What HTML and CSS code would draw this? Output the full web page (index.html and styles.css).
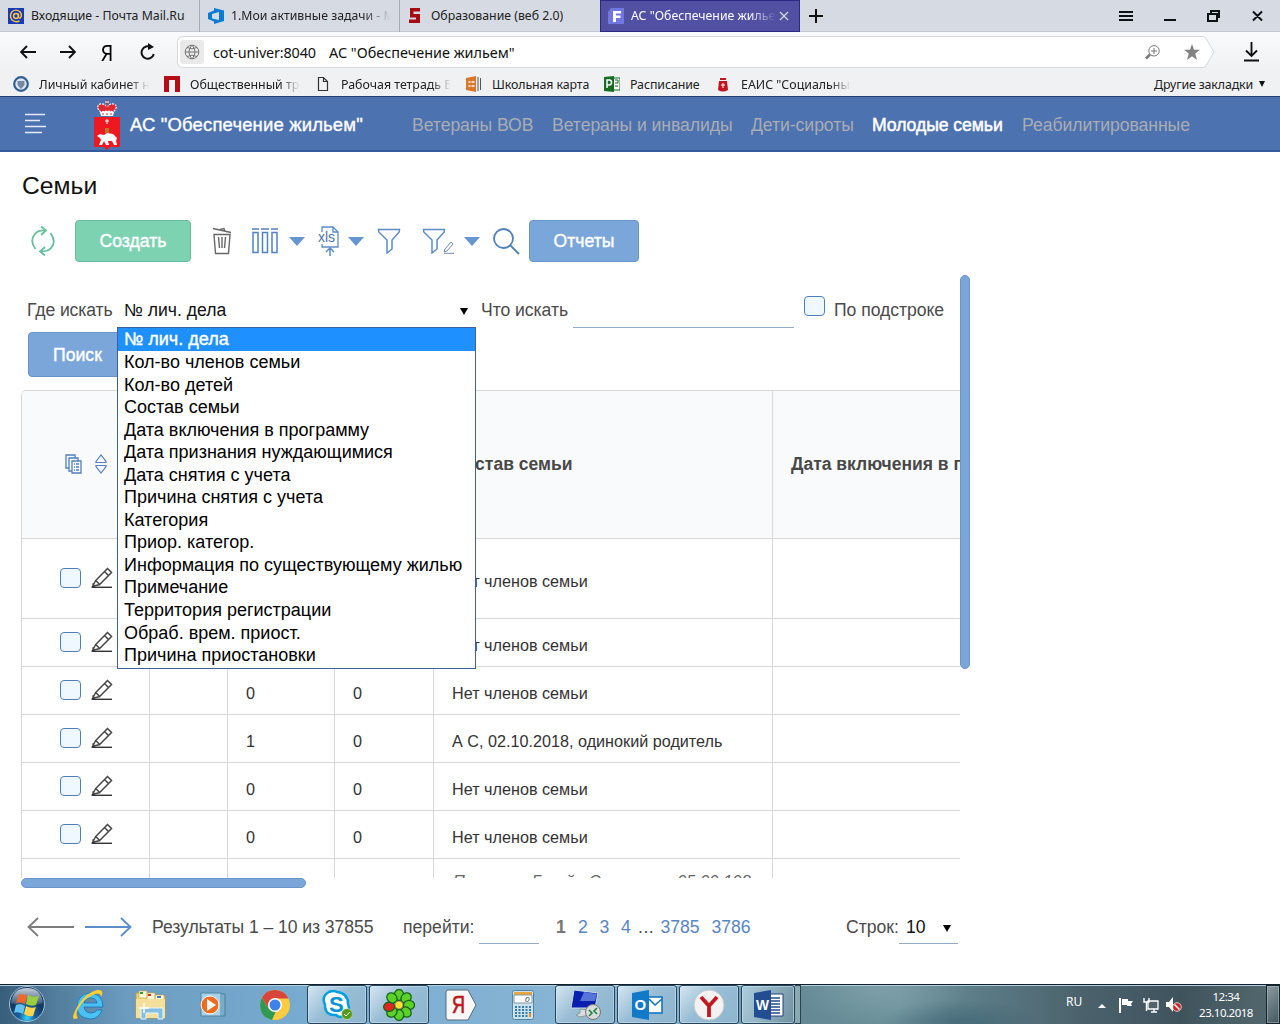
FILE: index.html
```html
<!DOCTYPE html>
<html lang="ru">
<head>
<meta charset="utf-8">
<title>АС "Обеспечение жильем"</title>
<link rel="stylesheet" href="styles.css">
</head>
<body>
<svg class="defs" width="0" height="0" aria-hidden="true">
  <symbol id="pencil" viewBox="0 0 22 22"><path d="M4.700 13.500 16.500 1.500 20.500 5.500 8.700 17.500zM13.500 4.500l4 4M4.700 13.500 1.500 19.500 8.700 17.500M1.500 16.500l2.500 3" fill="none" stroke="#454545" stroke-width="1.500"/><path d="M1 20.300h20" stroke="#333" stroke-width="1.400"/></symbol>
  <symbol id="funnel" viewBox="0 0 24 26"><path d="M1.500 1.500h21L22.200 4 15 12v9l-5 4V12L1.800 4zM1.500 1.500h21" fill="none" stroke="#5b8dc9" stroke-width="1.500"/></symbol>
</svg>

<div class="tabs">
  <div class="tab"><svg width="16" height="16"><rect width="16" height="16" fill="#163bb8"/><circle cx="8" cy="8" r="2.400" fill="none" stroke="#ffc43d" stroke-width="1.500"/><path d="M10.500 5.500v3.500q.6 1.800 2 .7Q14.500 7 12 3.800 8 .5 4 3.700 1 8 4 12q4 3 7.500.800" fill="none" stroke="#ffc43d" stroke-width="1.400"/></svg><span class="t-mail">Входящие - Почта Mail.Ru</span></div>
  <div class="tab"><svg width="16" height="16"><path d="M0 5 6 2.500V0l10 2.500v10.500L6 16v-2.500L0 11zM4 6v4.500l7 1.500V4z" fill="#087cd3" fill-rule="evenodd"/></svg><span class="t-task fade">1.Мои активные задачи - M</span></div>
  <div class="tab last"><svg width="16" height="16"><path d="M2 0h10v3.500H5.500V6H12v9H1v-3.500h7V9.500H2z" fill="#a50b13"/></svg><span class="t-edu">Образование (веб 2.0)</span></div>
  <div class="tab active"><svg width="16" height="16"><path d="M3 0h13v16H0V4z" fill="#7276e0"/><path d="M5 3h8v2.500H8v2h4.500V10H8v4H5z" fill="#fff"/></svg><span class="t-act fade">АС "Обеспечение жильем"</span><svg class="tab-x" width="10" height="10"><path d="m1 1 8 8m0-8L1 9" stroke="#d9d9f5" stroke-width="1.200"/></svg></div>
  <svg class="plus" width="14" height="14"><path d="M7 0v14M0 7h14" stroke="#111" stroke-width="2"/></svg>
  <svg class="winbtns" width="146" height="16"><g fill="none" stroke="#0b1216" stroke-width="2"><path d="M0 4h14M0 8h14M0 12h14M45 12h12M92 7V3h8v6h-3M89 6h9v7h-9zM134 3.500l9 9m0-9-9 9"/></g></svg>
</div>

<div class="toolbar">
  <div class="nav">
    <svg width="16" height="16"><path d="M16 8H1m6-6L1 8l6 6" fill="none" stroke="#111" stroke-width="1.900"/></svg>
    <svg width="16" height="16"><path d="M0 8h15M9 2l6 6-6 6" fill="none" stroke="#111" stroke-width="1.900"/></svg>
    <span class="ya">Я</span>
    <svg width="16" height="18"><path d="M11 4.200A6.200 6.200 0 1 0 13.800 11" fill="none" stroke="#111" stroke-width="2"/><path d="M8 0v7l6-3z" fill="#111"/></svg>
  </div>
  <div class="address">
    <svg class="shape" viewBox="0 0 1040 32" width="1040" height="32"><path d="M7.500.5H1027q2 0 3 2l8 13.500-8 13.500q-1 2-3 2H7.500q-6 0-6-6V6.500q0-6 6-6z" fill="#fff" stroke="#d6d8da"/></svg>
    <span class="globe"><svg width="16" height="16" fill="none" stroke="#777"><circle cx="8" cy="8" r="6.800"/><path d="M1 8h14M8 1q-6 7 0 14M8 1q6 7 0 14M3 3.500q5 2.500 10 0M3 12.500q5-2.500 10 0"/></svg></span>
    <span class="host">cot-univer:8040</span><span class="page">АС "Обеспечение жильем"</span>
    <svg class="zoom" width="15" height="15" fill="none" stroke="#777"><circle cx="9" cy="5.800" r="5.200"/><path d="M9 3v6M6 6h6"/><path d="M5 9.500l-4 4" stroke-width="2.500"/></svg>
    <svg class="star" width="16" height="16"><path d="m8 0 2 5.700 6 .1-4.800 3.700L13 16l-5-3.700L3 16l1.800-6.500L0 5.800l6-.1z" fill="#818181"/></svg>
  </div>
  <svg class="download" width="15" height="20"><path d="M7.500 0v14M2 8.500l5.500 5.500L13 8.500M0 18.500h15" fill="none" stroke="#111" stroke-width="1.900"/></svg>
</div>

<div class="bookmarks">
  <div class="bm b1"><svg width="16" height="16"><circle cx="8" cy="8" r="6.800" fill="#dce4ec" stroke="#315f91" stroke-width="2.200"/><path d="M4.500 5h7v4L8 13 4.500 9z" fill="#7289a0"/></svg><span class="fade">Личный кабинет н</span></div>
  <div class="bm b2"><svg width="16" height="16"><path d="M0 0h16v16h-5V4H5v12H0z" fill="#b30d17"/></svg><span class="fade">Общественный тр</span></div>
  <div class="bm b3"><svg width="12" height="16"><path d="M1.500 1.500h5l4 4v9h-9zM6.500 1.500v4h4" fill="none" stroke="#333" stroke-width="1.200"/></svg><span class="fade">Рабочая тетрадь Б</span></div>
  <div class="bm b4"><svg width="16" height="16"><path d="M0 2 10 0v16L0 14z" fill="#d9782d"/><path d="M2.500 6h2m1 0h3m-6 4h2m1 0h3" stroke="#fff" stroke-width="1.700"/><path d="M12 1v14M14.500 2v12" stroke="#555"/></svg><span>Школьная карта</span></div>
  <div class="bm b5"><svg width="16" height="16"><path d="M9 2h7v12H9z" fill="#fff" stroke="#176d22"/><path d="M0 1 10 0v16L0 15z" fill="#176d22"/><path d="M3 12V4h2.500q2 0 2 2.500T5 9H3" fill="none" stroke="#fff" stroke-width="1.500"/><path d="M11 4h3v3h-3m3 3h-3" fill="none" stroke="#176d22"/></svg><span>Расписание</span></div>
  <div class="bm b6"><svg width="10" height="15"><path d="M1 4h8l1 9q-5 3-10 0zM2 1h6v2H2z" fill="#c0171f"/><path d="M5 6v5M3 8h4" stroke="#fff"/></svg><span class="fade">ЕАИС "Социальны</span></div>
  <div class="other">Другие закладки<i></i></div>
</div>

<header>
  <svg class="burger" width="22" height="22"><path d="M1 1.500h20M1 7.500h15M1 13.500h21M1 19.500h17" stroke="#e3eaf6" stroke-width="1.600"/></svg>
  <svg class="crest" width="28" height="50"><path d="M1 17h26v29q0 1-1 1h-9l-3 3-3-3H2q-1 0-1-1z" fill="#ef1820"/><path d="M7 12q7-3 14 0l-1 4H8z" fill="#fff"/><path d="M8 12Q2 7 7 4q4-1 7 3 3-4 7-3 5 3-1 8-6-2-12 0z" fill="#e22730" stroke="#fff" stroke-width="1.200" stroke-dasharray="2 1"/><path d="M14 0v11M9 14h2m2 0h2m2 0h2" stroke="#c33" stroke-width="1.200"/><path d="M12 2h4" stroke="#fff"/><path d="M14 19v5m-2-3h4" stroke="#fff"/><path d="M12 28h4v5h-4z" fill="#b4761f"/><path d="m4 36 3-2 4 1 3-2 6 1 4 4-1 3 1 4h-3l-2-4-4 0 1 4h-3l-2-4-2 4H6l2-5-1-2z" fill="#fff"/></svg>
  <span class="brand">АС "Обеспечение жильем"</span>
  <nav><span class="n1">Ветераны ВОВ</span><span class="n2">Ветераны и инвалиды</span><span class="n3">Дети-сироты</span><span class="n4 on">Молодые семьи</span><span class="n5">Реабилитированные</span></nav>
</header>

<main>
  <h1>Семьи</h1>
  <div class="actions">
    <svg class="refresh" width="24" height="30" fill="none" stroke="#65c19b" stroke-width="1.800"><path d="M4.500 23Q-1.500 15 3.500 8.500 7 4 14 4.500M10 .5l5 4-5 4.500M19.500 7q6 8 1 14.500-3 4-10.500 4M14 21l-5 4.500 5 4"/></svg>
    <button class="btn green">Создать</button>
    <svg class="trash" width="20" height="28" fill="none" stroke="#686868" stroke-width="1.400"><path d="M1 1.500l18 4M8 2.500l4-1 1 3M2 7.500h16l-1.500 19h-13zM6.500 10l1 11M10 10v11M13.500 10l-1 11"/></svg>
    <svg class="cols" width="27" height="26" fill="none" stroke="#4f83c3" stroke-width="1.500"><path d="M0 1h7M9 1h8M19 1h7M1 4.500h5v20H1zM10.500 4.500h5v20h-5zM20 4.500h5v20h-5z"/></svg>
    <i class="caret c1"></i>
    <svg class="xls" width="22" height="31"><path d="M4 6V1h11l5 5v15H4v-3M15 1v5h5" fill="none" stroke="#5b8dc9" stroke-width="1.300"/><path d="M12 30v-8m-4 4 4-4 4 4" fill="none" stroke="#5b8dc9" stroke-width="1.500"/><text x="0" y="16" textLength="17" font-family="Liberation Sans, sans-serif" font-size="14" fill="#4f74a8">xls</text></svg>
    <i class="caret c2"></i>
    <svg class="fun1" width="24" height="26"><use href="#funnel"/></svg>
    <svg class="fun2" width="24" height="26"><use href="#funnel"/></svg>
    <svg class="mini" width="11" height="13"><path d="m2 8 6-7 2 2-6 7-3 1zM1 12.300h10" fill="none" stroke="#7389bd"/></svg>
    <i class="caret c3"></i>
    <svg class="loupe" width="27" height="27" fill="none" stroke="#4f83b9" stroke-width="1.800"><circle cx="10.500" cy="10.500" r="9.500"/><path d="m17 17 9 9"/></svg>
    <button class="btn blue">Отчеты</button>
  </div>

  <div class="grid-area">
    <div class="left">
      <div class="search">
        <label class="where">Где искать</label>
        <div class="select"><span class="sel-text">№ лич. дела</span><i class="arr"></i>
          <ul class="options"><li class="sel">№ лич. дела</li><li>Кол-во членов семьи</li><li>Кол-во детей</li><li>Состав семьи</li><li>Дата включения в программу</li><li>Дата признания нуждающимися</li><li>Дата снятия с учета</li><li>Причина снятия с учета</li><li>Категория</li><li>Приор. категор.</li><li>Информация по существующему жилью</li><li>Примечание</li><li>Территория регистрации</li><li>Обраб. врем. приост.</li><li>Причина приостановки</li></ul>
        </div>
        <label class="what">Что искать</label><span class="field"></span>
        <span class="check"></span><label class="sub">По подстроке</label>
      </div>
      <button class="btn blue find">Поиск</button>
      <div class="table">
        <div class="row head"><div class="tools"><svg width="17" height="20" fill="none" stroke="#527fbd" stroke-width="1.300"><path d="M3.500 14H1V1h9v2.500M6.500 17H4V4h9v2.500M7 7h9v12H7zM9 10h1m1 0h3m-5 3h1m1 0h3m-5 3h1m1 0h3"/></svg><svg class="sort" width="12" height="20" fill="none" stroke="#527fbd" stroke-width="1.200"><path d="M1 7.500 6 1l5 6.500v1H1zM1 11.500h10v1L6 19l-5-6.500z"/></svg></div><div></div><div></div><div></div><div>Состав семьи</div><div>Дата включения в программу</div></div>
        <div class="row tall"><div class="tools"><i class="check"></i><svg width="22" height="22"><use href="#pencil"/></svg></div><div></div><div></div><div></div><div>Нет членов семьи</div><div></div></div>
        <div class="row"><div class="tools"><i class="check"></i><svg width="22" height="22"><use href="#pencil"/></svg></div><div></div><div></div><div></div><div>Нет членов семьи</div><div></div></div>
        <div class="row"><div class="tools"><i class="check"></i><svg width="22" height="22"><use href="#pencil"/></svg></div><div></div><div>0</div><div>0</div><div>Нет членов семьи</div><div></div></div>
        <div class="row"><div class="tools"><i class="check"></i><svg width="22" height="22"><use href="#pencil"/></svg></div><div></div><div>1</div><div>0</div><div>А С, 02.10.2018, одинокий родитель</div><div></div></div>
        <div class="row"><div class="tools"><i class="check"></i><svg width="22" height="22"><use href="#pencil"/></svg></div><div></div><div>0</div><div>0</div><div>Нет членов семьи</div><div></div></div>
        <div class="row"><div class="tools"><i class="check"></i><svg width="22" height="22"><use href="#pencil"/></svg></div><div></div><div>0</div><div>0</div><div>Нет членов семьи</div><div></div></div>
        <div class="row cut"><div></div><div></div><div></div><div></div><div><em>Панкеева Гусейн Сергеевна 05.09.198</em></div><div></div></div>
      </div>
    </div>
    <div class="vbar"></div>
  </div>
  <div class="hbar"></div>

  <div class="pager">
    <svg class="prev" width="47" height="20"><path d="M47 10H1M11 1 1.500 10 11 19" fill="none" stroke="#7d7d7d" stroke-width="1.800"/></svg>
    <svg class="next" width="47" height="20"><path d="M0 10h46M36 1l9.500 9-9.500 9" fill="none" stroke="#5b8dc9" stroke-width="1.800"/></svg>
    <span class="res">Результаты 1 – 10 из 37855</span><span class="go">перейти:</span><span class="goto"></span>
    <b class="p1">1</b><a class="p2">2</a><a class="p3">3</a><a class="p4">4</a><span class="dots">...</span><a class="p5">3785</a><a class="p6">3786</a>
    <span class="rows">Строк:</span><span class="ten">10<i class="arr"></i></span>
  </div>
</main>

<footer>
  <div class="start"><svg width="38" height="38" viewBox="0 0 38 38"><defs><radialGradient id="orb" cy=".9"><stop offset="0" stop-color="#35d4ff"/><stop offset=".45" stop-color="#17629f"/><stop offset="1" stop-color="#163b63"/></radialGradient><linearGradient id="gloss" x2="0" y2="1"><stop offset="0" stop-color="#fff" stop-opacity=".75"/><stop offset="1" stop-color="#fff" stop-opacity=".1"/></linearGradient></defs><circle cx="19" cy="19" r="17.500" fill="url(#orb)" stroke="#9dc0d4"/><path d="M3 18Q5 3 19 3t16 15q-16 5-32 0z" fill="url(#gloss)"/><path d="m11 9 8 1-2 9q-4-3-9-1z" fill="#f0672b"/><path d="M20 10q5 3 11 1l-3 9q-5 2-10-1z" fill="#9acd3c"/><path d="M8 20q5-2 9 1l-2 8q-5-3-9-1z" fill="#62c4f2"/><path d="M18 21q5 3 10 1l-3 9q-5 1-9-2z" fill="#ffd34b"/></svg></div>
  <div class="slot"><svg width="32" height="32"><path d="M30 18H11q1 6 7 6 4 0 6-3h5q-3 9-12 9Q4 29 4 17 5 5 17 4q13 1 13 14zM11 14h13q-1-5-6-5-6 0-7 5z" fill="#4bc1f3" stroke="#1772b7" stroke-width=".8"/><path d="M5 29Q-3 33 2 22 10 5 24 1q8-1 4 7 0-5-6-3Q11 9 5 20q-3 6 0 9z" fill="#ffcf30"/></svg></div>
  <div class="slot"><svg width="32" height="30"><path d="M1 3h10l2 3h17v22H1z" fill="#f2d77c" stroke="#b99a43"/><path d="M4 1h8v7H4zM12 3h8v7h-8zM20 5h9v7h-9z" fill="#fff9d9" stroke="#c7a64c" stroke-width=".7"/><path d="M5 2h3v2H5z" fill="#2b9e37"/><path d="M13 4h3v2h-3z" fill="#c8312b"/><path d="M22 6h4v2h-4z" fill="#3c79c5"/><path d="M1 9h29v19H1z" fill="#f4e09a"/><path d="M6 18h22v11h-5v-6H11v6H6z" fill="#83bfe0" stroke="#e5f6ff"/><path d="M9 13v10m-5-5h10" stroke="#fff" stroke-width="1.500"/></svg></div>
  <div class="slot"><svg width="28" height="26"><path d="M2 1h20v23H2z" fill="#a7d2eb" stroke="#55849e"/><path d="M22 2h4v22h-4" fill="#76adc9" stroke="#4c8098"/><circle cx="11" cy="13" r="9" fill="#f26a1b" stroke="#fff"/><path d="m8 7 9 6-9 6z" fill="#fff"/></svg></div>
  <div class="slot"><svg width="30" height="30" viewBox="0 0 30 30"><circle cx="15" cy="15" r="15" fill="#ffcc40"/><path d="M2 7.500 9 19l7 2-4 9Q0 27 0 15q0-4 2-7.500z" fill="#309a52"/><path d="M2 7.500 8.500 18l6.500-9.500h13.500A15 15 0 0 0 2 7.500z" fill="#d8453b"/><circle cx="15" cy="15" r="7" fill="#fff"/><circle cx="15" cy="15" r="5.500" fill="#3d82eb"/></svg></div>
  <div class="slot open"><svg width="30" height="30"><path d="M7 2q5-2 8 0 11 1 11 12 4 11-7 13-3 0-5-2Q3 26 3 15-1 6 7 2z" fill="#fff" stroke="#00a0df" stroke-width="2.500"/><text x="7" y="22" font-family="Liberation Sans, sans-serif" font-size="22" font-weight="bold" fill="#0094d4">S</text><circle cx="25" cy="24" r="5.500" fill="#549b18" stroke="#fff" stroke-width=".5"/><path d="m22 24 2 2 4-4" fill="none" stroke="#fff"/></svg></div>
  <div class="slot open"><svg width="32" height="32" viewBox="-16 -16 32 32"><g fill="#5cd226" stroke="#17631b" stroke-width="1.300"><ellipse cy="-10" rx="4.700" ry="5.500"/><ellipse cy="-10" rx="4.700" ry="5.500" transform="rotate(45)"/><ellipse cy="-10" rx="4.700" ry="5.500" transform="rotate(90)"/><ellipse cy="-10" rx="4.700" ry="5.500" transform="rotate(135)"/><ellipse cy="-10" rx="4.700" ry="5.500" transform="rotate(180)"/><ellipse cy="-10" rx="4.700" ry="5.500" transform="rotate(225)"/><ellipse cy="-10" rx="4.700" ry="5.500" transform="rotate(260)" fill="#e32620"/><ellipse cy="-10" rx="4.700" ry="5.500" transform="rotate(315)"/></g><circle r="4" fill="#ffe22e" stroke="#765" stroke-width=".7"/></svg></div>
  <div class="slot"><svg width="32" height="32"><path d="M3 1h20l8 15-8 15H3q-2 0-2-2V3q0-2 2-2z" fill="#f8f8f8" stroke="#566b7a"/><text x="7" y="24" textLength="13" lengthAdjust="spacingAndGlyphs" font-family="Liberation Sans, sans-serif" font-size="24" fill="#bb161b" stroke="#bb161b" stroke-width=".7">Я</text></svg></div>
  <div class="slot"><svg width="22" height="30"><rect x=".5" y=".5" width="21" height="29" rx="2" fill="#cbe2ef" stroke="#55849c"/><path d="M2 2h18v3H2z" fill="#eba53c"/><path d="M2 5h18v8H2z" fill="#fff" stroke="#8199a7"/><text x="13" y="12" font-family="Liberation Sans, sans-serif" font-size="8" font-style="italic" fill="#234">0</text><path d="M3 17h16M3 20h16M3 23h16M3 26h16" stroke="#397aa5" stroke-width="2" stroke-dasharray="2 1.500"/><path d="M17 23h2v4h-2z" fill="#f18b20"/></svg></div>
  <div class="slot open"><svg width="31" height="31"><path d="M4 1 28 4l-3 15L1 19z" fill="#0a1fae" stroke="#cbd7e6"/><path d="m14 3 13 2-2 7L10 12z" fill="#7fa4ec" opacity=".65"/><path d="m10 20 8 1 1 5-9 2-4-2 4-2z" fill="#d9dddf" stroke="#899"/><circle cx="23" cy="23" r="7.500" fill="#d7dbda" stroke="#777"/><path d="m19 21 3 3-3 3m8-8-3 3 3 3" fill="none" stroke="#16813a" stroke-width="1.500"/></svg></div>
  <div class="slot open"><svg width="32" height="30"><path d="M17 7h14v16H17z" fill="#fff" stroke="#0b70bd" stroke-width="1.500"/><path d="m18 9 6 6 7-6" fill="none" stroke="#0b70bd" stroke-width="1.500"/><path d="m1 3 17-3v30L1 27z" fill="#1179c7"/><text x="3.500" y="20" font-family="Liberation Sans, sans-serif" font-size="15" font-weight="bold" fill="#fff">O</text></svg></div>
  <div class="slot open"><svg width="32" height="32"><circle cx="16" cy="16" r="15" fill="#f4f1f1" stroke="#c6c9cc"/><path d="m8 8 8 9 8-9m-8 9v11" fill="none" stroke="#c01820" stroke-width="3.800"/></svg></div>
  <div class="slot open word"><svg width="31" height="30"><path d="M17 4h13v22H17z" fill="#fff" stroke="#243f7a"/><path d="M17 8h10m-10 3h10m-10 3h10m-10 3h10m-10 3h10m-10 3h10" stroke="#244a8b" stroke-width="1.300"/><path d="m1 3 17-3v30L1 27z" fill="#234d92"/><text x="3" y="20" textLength="13" lengthAdjust="spacingAndGlyphs" font-family="Liberation Sans, sans-serif" font-size="14" font-weight="bold" fill="#fff">W</text></svg></div>
  <i class="stack"></i>
  <div class="tray"><span class="lang">RU</span><i class="up"></i>
    <svg class="flag" width="16" height="16"><path d="M2 1v15" stroke="#fff" stroke-width="2"/><path d="M4 2h6v2h5l-2 3 1 2H9V8H4z" fill="#fff"/></svg>
    <svg class="net" width="16" height="16"><path d="M5 4h10v8H5zM8 15h6m-3-3v3" fill="#53636c" stroke="#fff" stroke-width="1.300"/><path d="M1 1v4h5V1M3.500 5v9" fill="none" stroke="#fff" stroke-width="1.400"/></svg>
    <svg class="vol" width="17" height="17"><path d="M0 6h3l4-5v15l-4-5H0z" fill="#fff"/><circle cx="11" cy="11" r="4.300" fill="#c92828" stroke="#fff" stroke-width=".7"/><path d="m8.500 8.500 5 5" stroke="#fff" stroke-width="1.500"/></svg>
    <div class="clock"><span>12:34</span><span>23.10.2018</span></div>
  </div>
  <i class="desk"></i>
</footer>
</body>
</html>
```
FILE: styles.css
```css
* { box-sizing: border-box; }
body { margin: 0; width: 1280px; height: 1024px; overflow: hidden; display: flex; flex-direction: column; background: #fff; font-family: "Liberation Sans", Arial, sans-serif; }
.defs { position: absolute; }
svg { flex: none; display: block; }
button { font: inherit; padding: 0; }
span, label, a { white-space: nowrap; }

/* browser chrome */
.tabs { height: 32px; flex: none; display: flex; align-items: center; background: #d6dae2; border-bottom: 1px solid #c5c9d1; font: 12.300px "Noto Sans", sans-serif; color: #222; }
.tab { width: 200px; height: 32px; padding: 0 8px; display: flex; align-items: center; gap: 7px; border-right: 1px solid #a6abb5; overflow: hidden; }
.tab.last { border: 0; }
.tab.active { padding-left: 7px; background: #5150a2; border: 1px solid #2c2a86; color: #fff; }
.tab span { overflow: hidden; }
.t-task { width: 160px; }
.t-act { width: 145px; }
.tab-x { margin-left: -4px; }
.fade { overflow: hidden; -webkit-mask-image: linear-gradient(90deg, #000 82%, transparent); mask-image: linear-gradient(90deg, #000 82%, transparent); }
.plus { margin-left: 9px; }
.winbtns { margin-left: auto; margin-right: 15px; }
.toolbar { height: 40px; flex: none; display: flex; align-items: center; padding-left: 20px; background: linear-gradient(#f9fafb, #f0f1f3); }
.nav { width: 156px; display: flex; align-items: center; gap: 24px; }
.ya { width: 16px; font: 22px/24px "Noto Sans", sans-serif; transform: scaleX(.9); }
.address { position: relative; width: 1040px; height: 32px; display: flex; align-items: center; font: 14.400px "Noto Sans", sans-serif; color: #111; }
.shape { position: absolute; left: 0; top: 0; }
.address > :not(.shape) { position: relative; }
.globe { width: 24px; height: 24px; margin-left: 4px; background: #e9e9e9; border-radius: 3px; display: grid; place-items: center; }
.host { width: 116px; margin-left: 9px; letter-spacing: -.15px; }
.zoom { margin-left: auto; }
.star { margin: 0 16px 0 24px; }
.download { margin-left: 28px; }
.bookmarks { height: 25px; flex: none; display: flex; background: #f0f1f3; border-bottom: 1px solid #233f77; font: 12.400px "Noto Sans", sans-serif; color: #222; }
.bm { display: flex; align-items: center; gap: 10px; flex: none; }
.b1 { padding-left: 13px; width: 164px; }
.b2 { width: 153px; }
.b3 { width: 149px; gap: 12px; }
.b4 { width: 138px; }
.b5 { width: 114px; }
.b6 { width: 136px; gap: 13px; }
.bm .fade { width: 110px; }
.b4 span, .b5 span { letter-spacing: -.1px; }
.other { margin-left: auto; margin-right: 15px; display: flex; align-items: center; gap: 6px; letter-spacing: -.15px; }
.other i { border: 3.500px solid transparent; border-top: 6px solid #111; border-bottom: 0; }

/* application header */
header { height: 55px; flex: none; display: flex; align-items: center; background: #4d72b0; border-bottom: 2px solid #345a9d; font-size: 17.600px; color: #a9acb2; }
.burger { margin-left: 24px; }
.crest { margin-left: 47px; margin-top: 3px; }
.brand { width: 282px; margin-left: 9px; margin-top: 2px; color: #fff; font-size: 18.500px; letter-spacing: .14px; -webkit-text-stroke: .35px #fff; }
nav { display: flex; margin-top: 4px; letter-spacing: -.05px; }
.n1 { width: 140px; } .n2 { width: 199px; } .n3 { width: 121px; } .n4 { width: 150px; }
.on { color: #fff; -webkit-text-stroke: .5px #fff; }

/* content */
main { height: 832px; flex: none; display: flex; flex-direction: column; color: #4a4a4a; font-size: 17.600px; }
h1 { margin: 19px 0 0 22px; height: 30px; font-size: 24.700px; line-height: 30px; font-weight: 400; color: #111; }
.actions { height: 42px; margin-top: 19px; padding-left: 31px; display: flex; align-items: center; }
.btn { color: #fff; border: 1px solid #5f91c9; border-radius: 4px; font-size: 17.600px; -webkit-text-stroke: .4px #fff; }
.blue { background: #7ba6d9; border-color: #6593cb; width: 110px; height: 42px; }
.green { background: #7dd2b2; border-color: #65bd9b; width: 116px; height: 42px; margin-left: 20px; }
.trash { margin-left: 21px; }
.cols { margin-left: 20px; }
.caret { border: 8px solid transparent; border-top: 9px solid #6695cf; border-bottom: 0; }
.c1 { margin-left: 10px; }
.xls { margin-left: 13px; }
.c2 { margin-left: 8px; }
.fun1 { margin-left: 13px; }
.fun2 { margin-left: 21px; }
.mini { margin: 12px 0 0 -3px; }
.c3 { margin-left: 10px; }
.loupe { margin-left: 13px; }
.actions .blue { margin-left: 9px; }

.grid-area { height: 616px; padding-left: 21px; display: flex; }
.left { width: 939px; padding-top: 20px; }
.search { height: 50px; padding-left: 6px; display: flex; align-items: center; }
.where { width: 90px; padding-top: 5px; letter-spacing: -.1px; }
.where, .what, .sub, .sel-text { line-height: 24px; }
.select { position: relative; width: 359px; height: 33px; padding: 5px 8px 0 7px; display: flex; align-items: center; color: #111; }
.arr { border: 4px solid transparent; border-top: 7px solid #000; border-bottom: 0; }
.select .arr { margin: 3px 0 0 auto; }
.options { position: absolute; z-index: 5; left: 0; top: 36px; width: 359px; height: 342px; margin: 0; padding: 0 0 1px; list-style: none; background: #fff; border: 1px solid #3c6399; display: grid; grid-template-rows: 23.500px; grid-auto-rows: 22.550px; line-height: 22px; font-size: 18px; color: #000; }
.options li { padding-left: 6px; }
.options .sel { background: #1e90ff; color: #fff; -webkit-text-stroke: .4px #fff; }
.what { width: 97px; padding: 5px 0 0 5px; letter-spacing: -.05px; }
.field { width: 221px; height: 33px; margin-top: 8px; border-bottom: 1px solid #8eabc9; }
.check { display: block; width: 21px; height: 20px; flex: none; border: 1.500px solid #4c7fb9; border-radius: 4px; background: #f0f8ff; }
.search > .check { margin: -2px 0 0 10px; }
.sub { margin-left: 9px; padding-top: 5px; letter-spacing: -.05px; }
.find.blue { display: block; width: 100px; height: 45px; margin: 0 0 0 7px; padding: 2px 1px 0 0; }
.table { height: 488px; margin-top: 13px; overflow: hidden; border-left: 1px solid #d8d8d8; border-top: 1px solid #d8d8d8; border-top-left-radius: 5px; font-size: 16.200px; color: #333; }
.row { height: 48px; display: grid; grid-template-columns: 128px 78px 107px 99px 339px 1fr; border-bottom: 1px solid #d8d8d8; }
.row > div { min-width: 0; overflow: hidden; white-space: nowrap; border-right: 1px solid #d8d8d8; padding: 6px 0 0 18px; display: flex; align-items: center; }
.row > div:last-child { border-right: 0; }
.row.tall { height: 80px; }
.row.head { height: 148px; background: #f9fafc; font-weight: 700; font-size: 17.500px; color: #484848; }
.row.head > div { padding-top: 0; }
.row > .tools { padding: 0 0 2px 38px; gap: 10px; }
.row.head > .tools { padding-left: 43px; gap: 13px; }
.row.cut { height: 48px; border: 0; color: #666; }
.row.cut > div { align-items: flex-start; padding-top: 13px; }
.row.cut em { padding-left: 1px; letter-spacing: .2px; }
.vbar { width: 10px; height: 394px; margin-top: 13px; border: 1px solid #6795cc; border-radius: 5px; background: #7ba6d9; }
.hbar { width: 285px; height: 10px; margin: 0 0 0 21px; border: 1px solid #6795cc; border-radius: 5px; background: #7ba6d9; }
.pager { margin-top: 22px; height: 34px; padding-left: 27px; display: flex; align-items: center; }
.next { margin-left: 11px; }
.res { margin-left: 20px; width: 251px; letter-spacing: -.06px; }
.go { width: 76px; }
.goto { width: 60px; height: 34px; border-bottom: 1px solid #8eabc9; margin-right: 17px; }
.pager b { color: #777; width: 22px; }
.pager a { color: #5785c2; }
.p2, .p3 { width: 21.500px; } .p4 { width: 17px; } .dots { width: 22.500px; letter-spacing: .5px; } .p5 { width: 51px; } .p6 { width: 134.500px; }
.rows { width: 53px; }
.ten { width: 59px; height: 34px; padding: 1px 7px 0; display: flex; align-items: center; justify-content: space-between; color: #111; border-bottom: 1px solid #8eabc9; }
.ten .arr { margin-top: 2px; }

/* taskbar */
footer { height: 40px; flex: none; display: flex; border-top: 1px solid #10202c; box-shadow: inset 0 1px #b3cede; background: radial-gradient(ellipse 90px 34px at 880px 5px, #8aabb788, transparent), radial-gradient(ellipse 80px 24px at 960px 38px, #31586988, transparent), linear-gradient(90deg, #375e7a 0, #547f9e 60px, #6c9dc1 130px, #78abd0 300px, #86b4d4 560px, #86b0c9 700px, #648994 800px, #6d919b 900px, #5b7c87 980px, #4b626c 1080px, #3f535d 1180px, #52666d 1266px); }
.start { width: 59px; padding-left: 8px; }
.slot { width: 62px; height: 39px; padding-right: 2px; display: grid; place-items: center; }
.slot.open { width: 60px; margin-right: 2px; padding: 0; border: 1px solid #24455c; border-radius: 3px; background: linear-gradient(135deg, #d5e6f1, #98bdd5 45%, #8db5ce); box-shadow: inset 0 0 0 1px #d8ecf777; }
.slot.open.word { width: 54px; margin: 0; background: linear-gradient(110deg, #aecdde, #6f929f); }
.stack { width: 6px; border: 1px solid #29424e; border-left: 0; background: #8ba9b3; }
.tray { margin-left: auto; width: 200px; display: flex; align-items: center; color: #fff; font: 11.500px/16px "Noto Sans", sans-serif; }
.lang { width: 32px; margin-top: -5px; font-size: 12px; }
.up { border: 4px solid transparent; border-bottom: 4px solid #fff; border-top: 0; margin-top: 2px; }
.flag { margin-left: 12px; } .net { margin-left: 9px; } .vol { margin-left: 7px; }
.clock { width: 60px; margin-left: 13px; display: flex; flex-direction: column; text-align: center; letter-spacing: -.5px; }
.desk { width: 14px; border: 1px solid #17242b; box-shadow: inset 0 0 0 1px #b5c4c977; background: linear-gradient(135deg, #8b9ba1, #43565f); }
```
